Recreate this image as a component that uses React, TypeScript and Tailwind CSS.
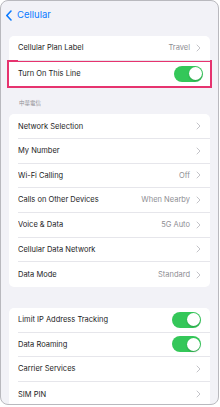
import React from "react";

type Row = {
  label: string;
  value?: string;
  toggle?: boolean;
};

function Chevron() {
  return (
    <svg width="5" height="8" viewBox="0 0 5 8" className="shrink-0">
      <path d="M1 1l3 3-3 3" fill="none" stroke="#c4c4c9" strokeWidth="1" strokeLinecap="round" strokeLinejoin="round" />
    </svg>
  );
}

function Toggle() {
  return (
    <div className="w-[29px] h-[16px] rounded-full bg-[#34c759] flex items-center justify-end pr-[1.5px] shrink-0">
      <div className="w-[13px] h-[13px] rounded-full bg-white shadow-[0_1px_2px_rgba(0,0,0,0.2)]" />
    </div>
  );
}

function SettingRow({ row, last }: { row: Row; last?: boolean }) {
  return (
    <div className="h-[24.67px] pl-[9px] flex">
      <div
        className={`flex-1 flex items-center pr-[9px] ${last ? "" : "border-b border-[#e6e6eb]"}`}
      >
        <span className="flex-1 text-[7.5px] text-[#1c1c1e] truncate">{row.label}</span>
        {row.value && <span className="text-[7.5px] text-[#8e8e93] mr-[6px]">{row.value}</span>}
        {row.toggle ? <Toggle /> : <Chevron />}
      </div>
    </div>
  );
}

const group2: Row[] = [
  { label: "Network Selection" },
  { label: "My Number" },
  { label: "Wi-Fi Calling", value: "Off" },
  { label: "Calls on Other Devices", value: "When Nearby" },
  { label: "Voice & Data", value: "5G Auto" },
  { label: "Cellular Data Network" },
  { label: "Data Mode", value: "Standard" },
];

const group3: Row[] = [
  { label: "Limit IP Address Tracking", toggle: true },
  { label: "Data Roaming", toggle: true },
  { label: "Carrier Services" },
  { label: "SIM PIN" },
];

export default function App() {
  return (
    <div className="w-[220px] h-[407px] bg-white" style={{ fontFamily: "Inter, 'Noto Sans CJK TC', sans-serif" }}>
      <div className="w-[219px] h-[405px] rounded-[8px] border border-[#b9b9be] bg-[#f2f2f7] overflow-hidden">
        {/* nav bar */}
        <div className="h-[28px] flex items-center pl-[4px] pt-[1px]">
          <svg width="8" height="11" viewBox="0 0 8 11" className="mr-[4px]">
            <path d="M6 1L1.8 5.5 6 10" fill="none" stroke="#0a7aff" strokeWidth="1.6" strokeLinecap="round" strokeLinejoin="round" />
          </svg>
          <span className="text-[9.5px] text-[#0a7aff]">Cellular</span>
        </div>

        {/* group 1 */}
        <div className="mt-[7px] mx-[8px] bg-white rounded-[5px]">
          <SettingRow row={{ label: "Cellular Plan Label", value: "Travel" }} />
          <div className="-mx-[2px] -mt-[1px] border-2 border-[#e6336f] bg-white">
            <div className="h-[24.67px] pl-[9px] pr-[7px] flex items-center">
              <span className="flex-1 text-[7.5px] text-[#1c1c1e]">Turn On This Line</span>
              <Toggle />
            </div>
          </div>
        </div>

        <div className="mt-[11px] pl-[18px] text-[5.5px] text-[#8e8e93] h-[9px] leading-[9px]">中華電信</div>

        {/* group 2 */}
        <div className="mt-[6px] mx-[8px] bg-white rounded-[5px]">
          {group2.map((r, i) => (
            <SettingRow key={r.label} row={r} last={i === group2.length - 1} />
          ))}
        </div>

        {/* group 3 */}
        <div className="mt-[21px] mx-[8px] bg-white rounded-[5px]">
          {group3.map((r, i) => (
            <SettingRow key={r.label} row={r} last={i === group3.length - 1} />
          ))}
        </div>
      </div>
    </div>
  );
}
